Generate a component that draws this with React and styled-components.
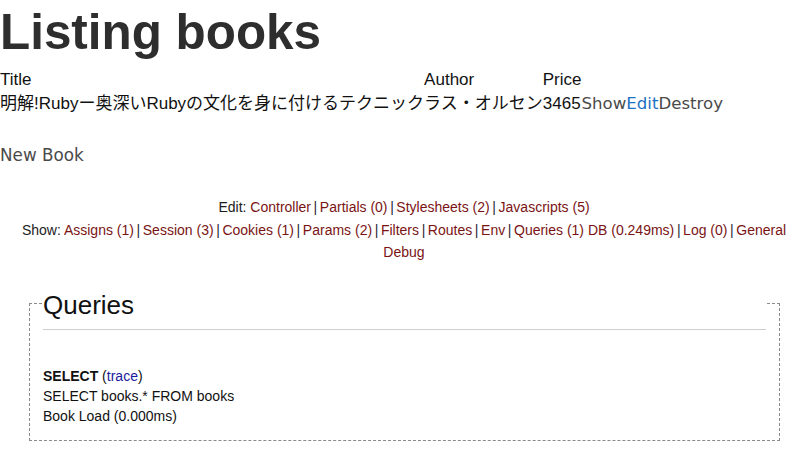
import React from "react";
import styled, { createGlobalStyle } from "styled-components";

const Global = createGlobalStyle`
  html, body { margin: 0; padding: 0; background: #fff; }
  body { font-family: "Liberation Sans", Arial, "Noto Sans CJK JP", sans-serif; color: #111; }
`;

const Page = styled.div`
  width: 800px;
  height: 458px;
  overflow: hidden;
`;

const Heading = styled.h1`
  margin: 4px 0 9px 0;
  font-size: 49.4px;
  line-height: 56px;
  font-weight: bold;
  color: #2e2e2e;
`;

const BooksTable = styled.table`
  border-collapse: separate;
  border-spacing: 0;
  font-size: 17px;
  font-family: "Liberation Sans", Arial, "Noto Sans CJK JP", sans-serif;
`;

const HeadCell = styled.th`
  text-align: left;
  font-weight: normal;
  padding: 1px 0;
  color: #111;
  line-height: 20px;
`;

const Cell = styled.td`
  padding: 1px 0;
  color: #111;
  line-height: 24px;
  white-space: nowrap;
`;

const ActionLink = styled.a`
  font-family: "DejaVu Sans", Verdana, sans-serif;
  font-size: 16.6px;
  color: ${(p) => (p.$tone === "blue" ? "#1d72c4" : "#4a4a4a")};
  text-decoration: none;
`;

const NewLink = styled.a`
  display: block;
  margin-top: 28px;
  font-family: "DejaVu Sans", Verdana, sans-serif;
  font-size: 16.8px;
  line-height: 20px;
  color: #4a4a4a;
  text-decoration: none;
`;

const DebugBar = styled.div`
  margin-top: 31px;
  padding-left: 8px;
  text-align: center;
  font-size: 14px;
  line-height: 22.5px;
  color: #1c1c1c;
`;

const DebugLine = styled.div``;

const DebugLink = styled.a`
  color: #7a1414;
  text-decoration: none;
`;

const Sep = styled.span`
  display: inline-block;
  padding: 0 2.6px;
  color: #1f2a36;
`;

const QueryBox = styled.fieldset`
  margin: 13px 20px 0 29px;
  padding: 0 13px 14px 13px;
  border: 1px dashed #8a8a8a;
  min-width: 0;
`;

const QueryLegend = styled.legend`
  width: 100%;
  box-sizing: border-box;
  padding: 13px 0 9px 0;
  margin: 0;
  font-size: 26px;
  line-height: 30px;
  color: #111;
  border-bottom: 1px solid #cfcfcf;
`;

const QueryList = styled.div`
  margin-top: 36px;
  font-size: 14px;
  line-height: 20px;
  color: #111;
`;

const Strong = styled.b`
  font-weight: bold;
`;

const TraceLink = styled.a`
  color: #1a1a9c;
  text-decoration: none;
`;

const editLinks = ["Controller", "Partials (0)", "Stylesheets (2)", "Javascripts (5)"];
const showLinks = [
  "Assigns (1)",
  "Session (3)",
  "Cookies (1)",
  "Params (2)",
  "Filters",
  "Routes",
  "Env",
  "Queries (1) DB (0.249ms)",
  "Log (0)",
  "General Debug",
];

function LinkList({ items }) {
  return items.map((t, i) => (
    <React.Fragment key={t}>
      {i > 0 && <Sep>|</Sep>}
      <DebugLink href="#">{t}</DebugLink>
    </React.Fragment>
  ));
}

export default function App() {
  return (
    <Page>
      <Global />
      <Heading>Listing books</Heading>
      <BooksTable>
        <thead>
          <tr>
            <HeadCell>Title</HeadCell>
            <HeadCell>Author</HeadCell>
            <HeadCell>Price</HeadCell>
            <HeadCell />
            <HeadCell />
            <HeadCell />
          </tr>
        </thead>
        <tbody>
          <tr>
            <Cell>明解!Rubyー奥深いRubyの文化を身に付けるテクニック</Cell>
            <Cell>ラス・オルセン</Cell>
            <Cell>3465</Cell>
            <Cell><ActionLink href="#">Show</ActionLink></Cell>
            <Cell><ActionLink href="#" $tone="blue">Edit</ActionLink></Cell>
            <Cell><ActionLink href="#">Destroy</ActionLink></Cell>
          </tr>
        </tbody>
      </BooksTable>
      <NewLink href="#">New Book</NewLink>
      <DebugBar>
        <DebugLine>
          Edit: <LinkList items={editLinks} />
        </DebugLine>
        <DebugLine>
          Show: <LinkList items={showLinks} />
        </DebugLine>
      </DebugBar>
      <QueryBox>
        <QueryLegend>Queries</QueryLegend>
        <QueryList>
          <div>
            <Strong>SELECT</Strong> (<TraceLink href="#">trace</TraceLink>)
          </div>
          <div>SELECT books.* FROM books</div>
          <div>Book Load (0.000ms)</div>
        </QueryList>
      </QueryBox>
    </Page>
  );
}
